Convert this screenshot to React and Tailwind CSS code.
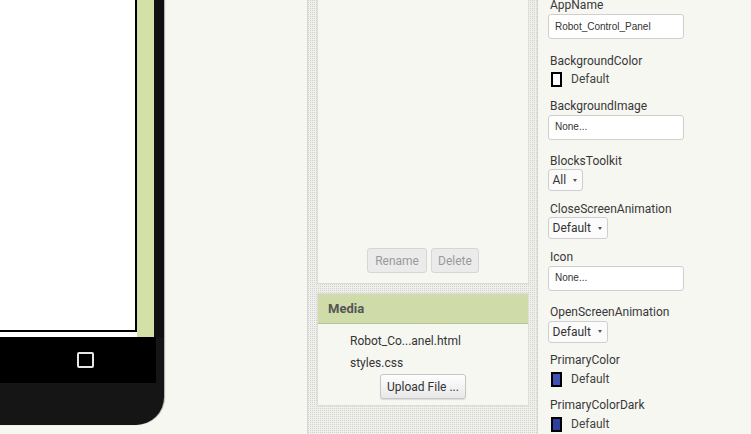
import React from 'react';

const dots =
  '[background-image:conic-gradient(from_270deg_at_1px_1px,#d2d2d0_90deg,#efefec_0)] [background-size:2px_2px]';

const Label = ({ children }) => (
  <div className="shrink-0 h-[14px] leading-[14px] pl-[2px] text-[#383838] whitespace-nowrap">{children}</div>
);

const TextBox = ({ value }) => (
  <div className="shrink-0 mt-[2px] mb-[14.3px] w-[136px] h-[25px] border border-[#cfcfcf] rounded-[3px] bg-white flex items-center pl-[6px] pb-[1px] font-['Liberation_Sans',Arial,sans-serif] text-[10px] text-[#333]">
    {value}
  </div>
);

const Select = ({ value }) => (
  <div className="shrink-0 mt-[1.5px] mb-[10.5px] self-start h-[22px] border border-[#cfcfcf] rounded-[3px] bg-[#fbfbfb] flex items-center pl-[3.5px] pr-[5px] gap-[7px] text-[#333]">
    <span>{value}</span>
    <span className="w-0 h-0 border-l-[2px] border-r-[2px] border-t-[3px] border-l-transparent border-r-transparent border-t-[#555]" />
  </div>
);

const Swatch = ({ color }) => (
  <div className="shrink-0 mt-[2px] mb-[9px] h-[20px] flex items-center">
    <div className={`shrink-0 ml-[3px] w-[11px] h-[15px] border-2 border-black ${color}`} />
    <span className="ml-[9px] mt-[-1px] text-[#444]">Default</span>
  </div>
);

export default function App() {
  return (
    <div className="flex w-[751px] h-[434px] overflow-hidden bg-[#f7f7f2] font-[Roboto,sans-serif] text-[12px] text-[#333]">
      {/* phone preview */}
      <div className="w-[307px] shrink-0">
        <div className="w-[164px] h-[425px] bg-[#151515] rounded-br-[28px] overflow-hidden flex flex-col shadow-[1px_0_1px_rgba(0,0,0,0.3)]">
          <div className="flex h-[337px] shrink-0">
            <div className="w-[137px] bg-white">
              <div className="h-[332px] border-r-2 border-b-2 border-black bg-white" />
            </div>
            <div className="w-[17px] bg-[#d3e0a8]" />
            <div className="flex-1 bg-[#101010]" />
          </div>
          <div className="w-[156px] h-[46px] shrink-0 bg-black flex items-center">
            <div className="ml-[77px] w-[17px] h-[16px] border-2 border-[#e6e6e6] rounded-[2px]" />
          </div>
        </div>
      </div>

      {/* components + media */}
      <div className={`w-[231px] shrink-0 flex flex-col pl-[9px] pr-[8px] border-x border-[#d6d6d4] ${dots}`}>
        <div className="h-[284px] shrink-0 bg-[#f7f7f2] border-x border-b border-[#dcdcd8] flex flex-col justify-end items-center pb-[10px]">
          <div className="flex gap-[4px]">
            <button className="h-[25px] px-[7px] rounded-[3px] border border-[#d6d6d6] bg-[#ebebeb] text-[#9a9a9a]">Rename</button>
            <button className="h-[25px] px-[6px] rounded-[3px] border border-[#d6d6d6] bg-[#ebebeb] text-[#9a9a9a]">Delete</button>
          </div>
        </div>
        <div className="shrink-0 mt-[9px] border border-[#dcdcd8] bg-[#f7f7f2]">
          <div className="h-[30px] bg-[#cfdca9] border-b border-[#b7c394] flex items-center pl-[10px] text-[13px] font-bold text-[#555]">
            Media
          </div>
          <div className="pt-[6px] pb-[6px] flex flex-col">
            <div className="pl-[32px] leading-[22px] text-[#333]">Robot_Co...anel.html</div>
            <div className="pl-[32px] leading-[22px] text-[#333]">styles.css</div>
            <button className="self-center h-[25px] px-[6px] rounded-[3px] border border-[#c6c6c6] bg-[linear-gradient(#fefefe,#e8e8e8)] shadow-[0_1px_1px_rgba(0,0,0,0.12)] text-[#333]">
              Upload File ...
            </button>
          </div>
        </div>
      </div>

      {/* properties */}
      <div className="flex-1 flex flex-col pl-[10px] mt-[-1.8px]">
        <Label>AppName</Label>
        <TextBox value="Robot_Control_Panel" />
        <Label>BackgroundColor</Label>
        <Swatch color="bg-white" />
        <Label>BackgroundImage</Label>
        <TextBox value="None..." />
        <Label>BlocksToolkit</Label>
        <Select value="All" />
        <Label>CloseScreenAnimation</Label>
        <Select value="Default" />
        <Label>Icon</Label>
        <TextBox value="None..." />
        <Label>OpenScreenAnimation</Label>
        <Select value="Default" />
        <Label>PrimaryColor</Label>
        <Swatch color="bg-[#3f51b5]" />
        <Label>PrimaryColorDark</Label>
        <Swatch color="bg-[#303f9f]" />
      </div>
    </div>
  );
}
